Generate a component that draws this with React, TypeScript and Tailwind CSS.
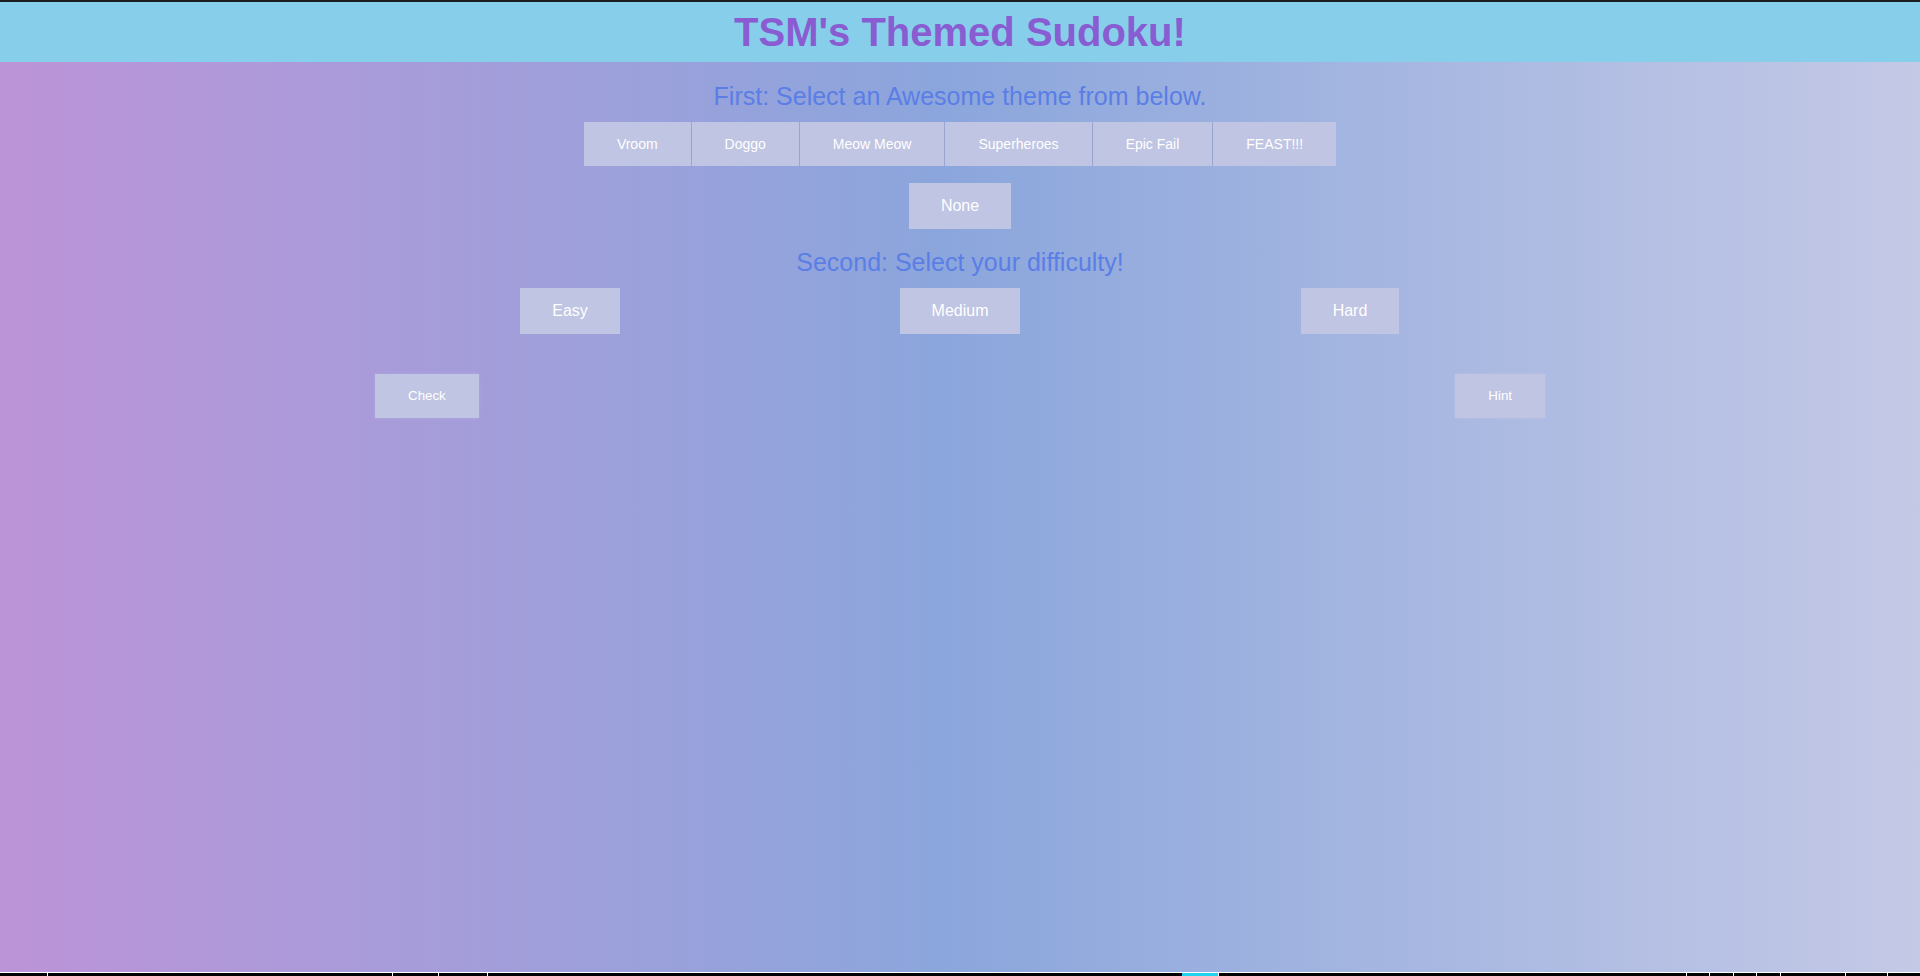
import React from "react";

const themes = ["Vroom", "Doggo", "Meow Meow", "Superheroes", "Epic Fail", "FEAST!!!"];

export default function App() {
  return (
    <div
      className="min-h-screen w-full flex flex-col bg-[linear-gradient(to_right,#bc94d8_0%,#8ba6dc_49%,#c4c9e6_100%)] text-white"
      style={{ fontFamily: '"Liberation Sans", Arial, sans-serif' }}
    >
      <div className="h-[2px] bg-[#1c1c1c]" />
      <header className="h-[60px] bg-[#87ceeb] flex items-center justify-center">
        <h1 className="text-[40px] font-bold leading-none text-[#8a5cd1]">TSM's Themed Sudoku!</h1>
      </header>

      <h2 className="mt-[19px] text-center text-[25px] leading-[30px] text-[#5b7ee6]">
        First: Select an Awesome theme from below.
      </h2>

      <div className="mt-[11px] flex justify-center">
        {themes.map((t, i) => (
          <button
            key={t}
            className={
              "h-[44px] px-[33px] bg-[#bfc5e2] text-[14px] text-white " +
              (i < themes.length - 1 ? "border-r border-[#9aa5cf]" : "")
            }
          >
            {t}
          </button>
        ))}
      </div>

      <div className="mt-[17px] flex justify-center">
        <button className="h-[46px] px-8 bg-[#bfc5e2] text-[16px] text-white">None</button>
      </div>

      <h2 className="mt-[18px] text-center text-[25px] leading-[30px] text-[#5b7ee6]">
        Second: Select your difficulty!
      </h2>

      <div className="mx-auto mt-[11px] w-[1170px] grid grid-cols-3">
        <div className="flex justify-center">
          <button className="h-[46px] px-8 bg-[#bfc5e2] text-[16px] text-white">Easy</button>
        </div>
        <div className="flex justify-center">
          <button className="h-[46px] px-8 bg-[#bfc5e2] text-[16px] text-white">Medium</button>
        </div>
        <div className="flex justify-center">
          <button className="h-[46px] px-8 bg-[#bfc5e2] text-[16px] text-white">Hard</button>
        </div>
      </div>

      <div className="mx-auto mt-[40px] w-[1170px] flex justify-between">
        <button className="h-[44px] px-[33px] bg-[#bfc5e2] text-[13.33px] text-white shadow-[0_0_3px_rgba(190,180,230,0.6)]">
          Check
        </button>
        <button className="h-[44px] px-[33px] bg-[#bfc5e2] text-[13.33px] text-white shadow-[0_0_3px_rgba(200,200,235,0.6)]">
          Hint
        </button>
      </div>

      <div className="mt-auto">
        <div className="h-px bg-white" />
        <div className="h-[3px] flex">
          <div className="w-[47px] bg-black" />
          <div className="w-[345px] bg-black border-l border-white" />
          <div className="w-[46px] bg-black border-l border-white" />
          <div className="w-[49px] bg-black border-l border-white" />
          <div className="w-[695px] bg-black border-l border-white" />
          <div className="w-[36px] bg-[#22d3ee]" />
          <div className="w-[468px] bg-black border-l border-white" />
          <div className="w-[23px] bg-black border-l border-white" />
          <div className="w-[24px] bg-black border-l border-white" />
          <div className="w-[23px] bg-black border-l border-white" />
          <div className="w-[24px] bg-black border-l border-white" />
          <div className="w-[65px] bg-black border-l border-white" />
          <div className="w-[42px] bg-black border-l border-white" />
          <div className="w-[33px] bg-black border-l border-white" />
        </div>
      </div>
    </div>
  );
}
